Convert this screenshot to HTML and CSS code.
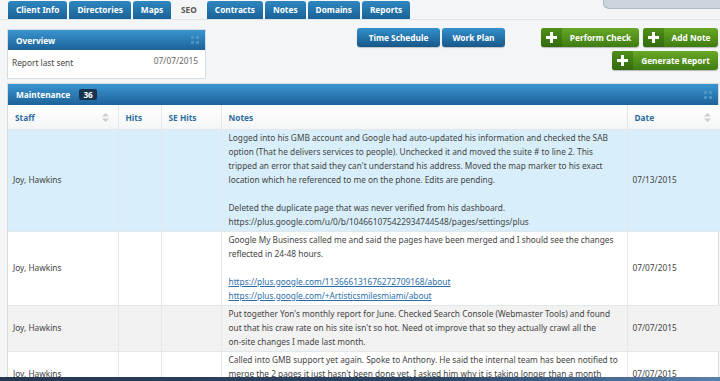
FILE: index.html
```html
<!DOCTYPE html>
<html lang="en">
<head>
    <meta charset="UTF-8">
    <meta name="viewport" content="width=device-width, initial-scale=1.0">
    <title>SEO - Client</title>
    <link rel="stylesheet" href="styles.css">
</head>
<body>
    <div class="topbar">
        <nav class="tabs">
            <a class="tab">Client Info</a>
            <a class="tab">Directories</a>
            <a class="tab">Maps</a>
            <a class="tab active">SEO</a>
            <a class="tab">Contracts</a>
            <a class="tab">Notes</a>
            <a class="tab">Domains</a>
            <a class="tab">Reports</a>
        </nav>
        <div class="search-tab"></div>
    </div>

    <div class="top-section">
        <div class="panel overview">
            <div class="panel-head">
                <span>Overview</span>
                <svg class="grip" width="8" height="8" viewBox="0 0 8 8"><path d="M0 0h3v3H0zM5 0h3v3H5zM0 5h3v3H0zM5 5h3v3H5z"/></svg>
            </div>
            <div class="overview-body">
                <span>Report last sent</span>
                <span class="muted">07/07/2015</span>
            </div>
        </div>

        <div class="blue-buttons">
            <button class="btn-blue">Time Schedule</button>
            <button class="btn-blue">Work Plan</button>
        </div>

        <div class="green-buttons">
            <button class="btn-green"><span class="plus"><svg width="11" height="11" viewBox="0 0 11 11"><path d="M4 0h3v4h4v3H7v4H4V7H0V4h4z"/></svg></span><span class="label">Perform Check</span></button>
            <button class="btn-green"><span class="plus"><svg width="11" height="11" viewBox="0 0 11 11"><path d="M4 0h3v4h4v3H7v4H4V7H0V4h4z"/></svg></span><span class="label">Add Note</span></button>
            <button class="btn-green"><span class="plus"><svg width="11" height="11" viewBox="0 0 11 11"><path d="M4 0h3v4h4v3H7v4H4V7H0V4h4z"/></svg></span><span class="label">Generate Report</span></button>
        </div>
    </div>

    <div class="panel maintenance">
        <div class="panel-head">
            <span>Maintenance <span class="badge">36</span></span>
            <svg class="grip" width="8" height="8" viewBox="0 0 8 8"><path d="M0 0h3v3H0zM5 0h3v3H5zM0 5h3v3H0zM5 5h3v3H5z"/></svg>
        </div>
        <table class="grid">
            <colgroup>
                <col class="c-staff">
                <col class="c-hits">
                <col class="c-se">
                <col class="c-notes">
                <col class="c-date">
            </colgroup>
            <thead>
                <tr>
                    <th><div class="sortable">Staff <svg width="7" height="9" viewBox="0 0 7 9"><path d="M3.5 0L7 3.5H0zM3.5 9L0 5.5h7z"/></svg></div></th>
                    <th>Hits</th>
                    <th>SE Hits</th>
                    <th>Notes</th>
                    <th><div class="sortable">Date <svg width="7" height="9" viewBox="0 0 7 9"><path d="M3.5 0L7 3.5H0zM3.5 9L0 5.5h7z"/></svg></div></th>
                </tr>
            </thead>
            <tbody>
                <tr class="selected">
                    <td>Joy, Hawkins</td>
                    <td></td>
                    <td></td>
                    <td class="note">Logged into his GMB account and Google had auto-updated his information and checked the SAB option (That he delivers services to people). Unchecked it and moved the suite # to line 2. This tripped an error that said they can't understand his address. Moved the map marker to his exact location which he referenced to me on the phone. Edits are pending.<br><br>Deleted the duplicate page that was never verified from his dashboard. https://plus.google.com/u/0/b/104661075422934744548/pages/settings/plus</td>
                    <td class="date">07/13/2015</td>
                </tr>
                <tr>
                    <td>Joy, Hawkins</td>
                    <td></td>
                    <td></td>
                    <td class="note">Google My Business called me and said the pages have been merged and I should see the changes reflected in 24-48 hours.<br><br><a href="#">https://plus.google.com/113666131676272709168/about</a><br><a href="#">https://plus.google.com/+Artisticsmilesmiami/about</a></td>
                    <td class="date">07/07/2015</td>
                </tr>
                <tr class="alt">
                    <td>Joy, Hawkins</td>
                    <td></td>
                    <td></td>
                    <td class="note">Put together Yon's monthly report for June. Checked Search Console (Webmaster Tools) and found out that his craw rate on his site isn't so hot. Need ot improve that so they actually crawl all the on&#8209;site changes I made last month.</td>
                    <td class="date">07/07/2015</td>
                </tr>
                <tr>
                    <td>Joy, Hawkins</td>
                    <td></td>
                    <td></td>
                    <td class="note">Called into GMB support yet again. Spoke to Anthony. He said the internal team has been notified to merge the 2 pages it just hasn't been done yet. I asked him why it is taking longer than a month and&nbsp;he said he would escalate it again.</td>
                    <td class="date">07/07/2015</td>
                </tr>
            </tbody>
        </table>
    </div>

    <div class="taskbar"></div>
</body>
</html>
```

FILE: styles.css
```css
:root {
    --green-top: #67a826;
    --green-bottom: #3f7c12;
    --page-bg: #f3f5f6;
    --line: #e2e7ea;
    --text: #444;
    --head-text: #2c6c9e;
}
html {
    overflow: hidden;
}
body {
    margin: 0;
    font-family: "Noto Sans", "DejaVu Sans", sans-serif;
    font-size: 8.3px;
    color: var(--text);
    background-color: var(--page-bg);
}
.topbar {
    position: relative;
    height: 19px;
    border-bottom: 1px solid #dfe5e8;
}
.tabs {
    display: flex;
    gap: 2px;
    padding: 1px 0 0 8px;
}
.tab {
    display: block;
    height: 18px;
    line-height: 18px;
    padding: 0 8px;
    font-weight: bold;
    color: #fff;
    background: linear-gradient(#2e86bf, #1b6398);
    border-radius: 3px 3px 0 0;
}
.tab.active {
    background: var(--page-bg);
    color: #555;
}
/* collapsed search drawer peeking from the top right */
.search-tab {
    position: absolute;
    top: 0;
    right: 0;
    width: 116px;
    height: 8px;
    background: #c9d5db;
    border-left: 1px solid #a9bac4;
    border-bottom: 1px solid #a9bac4;
    border-radius: 0 0 0 6px;
    z-index: 2;
}
.top-section {
    display: flex;
    align-items: flex-start;
    padding: 0 2px 0 7px;
}
.panel {
    background: #fff;
    border: 1px solid #d5dde2;
}
.panel-head {
    display: flex;
    justify-content: space-between;
    align-items: center;
    padding: 0 6px 0 8px;
    color: #fff;
    font-weight: bold;
    background: linear-gradient(#3a95cf, #1d6299);
}
.grip {
    fill: #4b95c9;
}
.overview {
    width: 197px;
    margin-top: 9px;
}
.overview .panel-head {
    height: 20px;
}
.overview-body {
    display: flex;
    justify-content: space-between;
    height: 28px;
    padding: 0 7px 0 4px;
    line-height: 26px;
}
.overview-body .muted {
    color: #666;
    line-height: 22px;
}
.blue-buttons {
    display: flex;
    gap: 2px;
    margin: 8px 0 0 151px;
}
.btn-blue {
    height: 19px;
    padding: 0;
    border: none;
    border-radius: 3px;
    font: inherit;
    font-weight: bold;
    white-space: nowrap;
    color: #fff;
    background: linear-gradient(#3290cc, #17578a);
    box-shadow: 0 1px 1px rgba(0, 0, 0, 0.2);
}
.btn-blue:first-child {
    width: 83px;
}
.btn-blue:last-child {
    width: 63px;
}
.green-buttons {
    display: flex;
    flex-wrap: wrap;
    justify-content: flex-end;
    gap: 4px;
    width: 180px;
    margin: 8px 0 0 auto;
}
.btn-green {
    display: flex;
    align-items: stretch;
    height: 19px;
    padding: 0;
    border: none;
    border-radius: 3px;
    font: inherit;
    font-weight: bold;
    color: #fff;
    background: linear-gradient(var(--green-top), var(--green-bottom));
    box-shadow: 0 1px 1px rgba(0, 0, 0, 0.25);
}
.btn-green .plus {
    display: flex;
    align-items: center;
    justify-content: center;
    flex: 0 0 21px;
    border-radius: 3px 0 0 3px;
    background: linear-gradient(#4f8f1a, #336a0c);
}
.btn-green .plus svg {
    fill: #fff;
}
.btn-green .label {
    flex: 1;
    line-height: 19px;
    text-align: center;
    white-space: nowrap;
}
.btn-green:nth-child(1) { width: 98px; }
.btn-green:nth-child(2) { width: 75px; }
.btn-green:nth-child(3) { width: 106px; }
.maintenance {
    margin: 4px 0 0 7px;
    width: 710px;
}
.maintenance .panel-head {
    height: 21px;
}
.badge {
    display: inline-block;
    margin-left: 7px;
    padding: 0 4px;
    line-height: 11px;
    border-radius: 2px;
    background: #18334f;
    color: #fff;
}
.grid {
    width: 100%;
    border-collapse: collapse;
    table-layout: fixed;
}
.c-staff { width: 110px; }
.c-hits { width: 43px; }
.c-se { width: 60px; }
.c-notes { width: 406px; }
.c-date { width: 93px; }
.grid th {
    height: 24px;
    padding: 0 7px;
    text-align: left;
    color: var(--head-text);
    background: linear-gradient(#ffffff, #f4f5f6);
    border-right: 1px solid var(--line);
    border-bottom: 1px solid var(--line);
}
.grid th:last-child,
.grid td:last-child {
    border-right: none;
}
.sortable {
    display: flex;
    justify-content: space-between;
    align-items: center;
}
.sortable svg {
    fill: #c9ced2;
    margin-right: 2px;
}
.grid td {
    padding: 1px 6px 2px 5px;
    line-height: 14px;
    vertical-align: middle;
    border-right: 1px solid var(--line);
    border-bottom: 1px solid var(--line);
}
.grid td.note {
    padding-left: 7px;
    padding-right: 6px;
}
.grid td.date {
    padding-left: 5px;
}
.grid tr.selected td {
    background: #d8effb;
}
.grid tr.alt td {
    background: #f2f2f2;
}
.grid a {
    color: #2d6ea8;
}
.taskbar {
    position: fixed;
    left: 0;
    right: 0;
    bottom: 0;
    height: 4px;
    background: linear-gradient(90deg, #26384f, #2d4565 60%, #5a80ad);
}
```
